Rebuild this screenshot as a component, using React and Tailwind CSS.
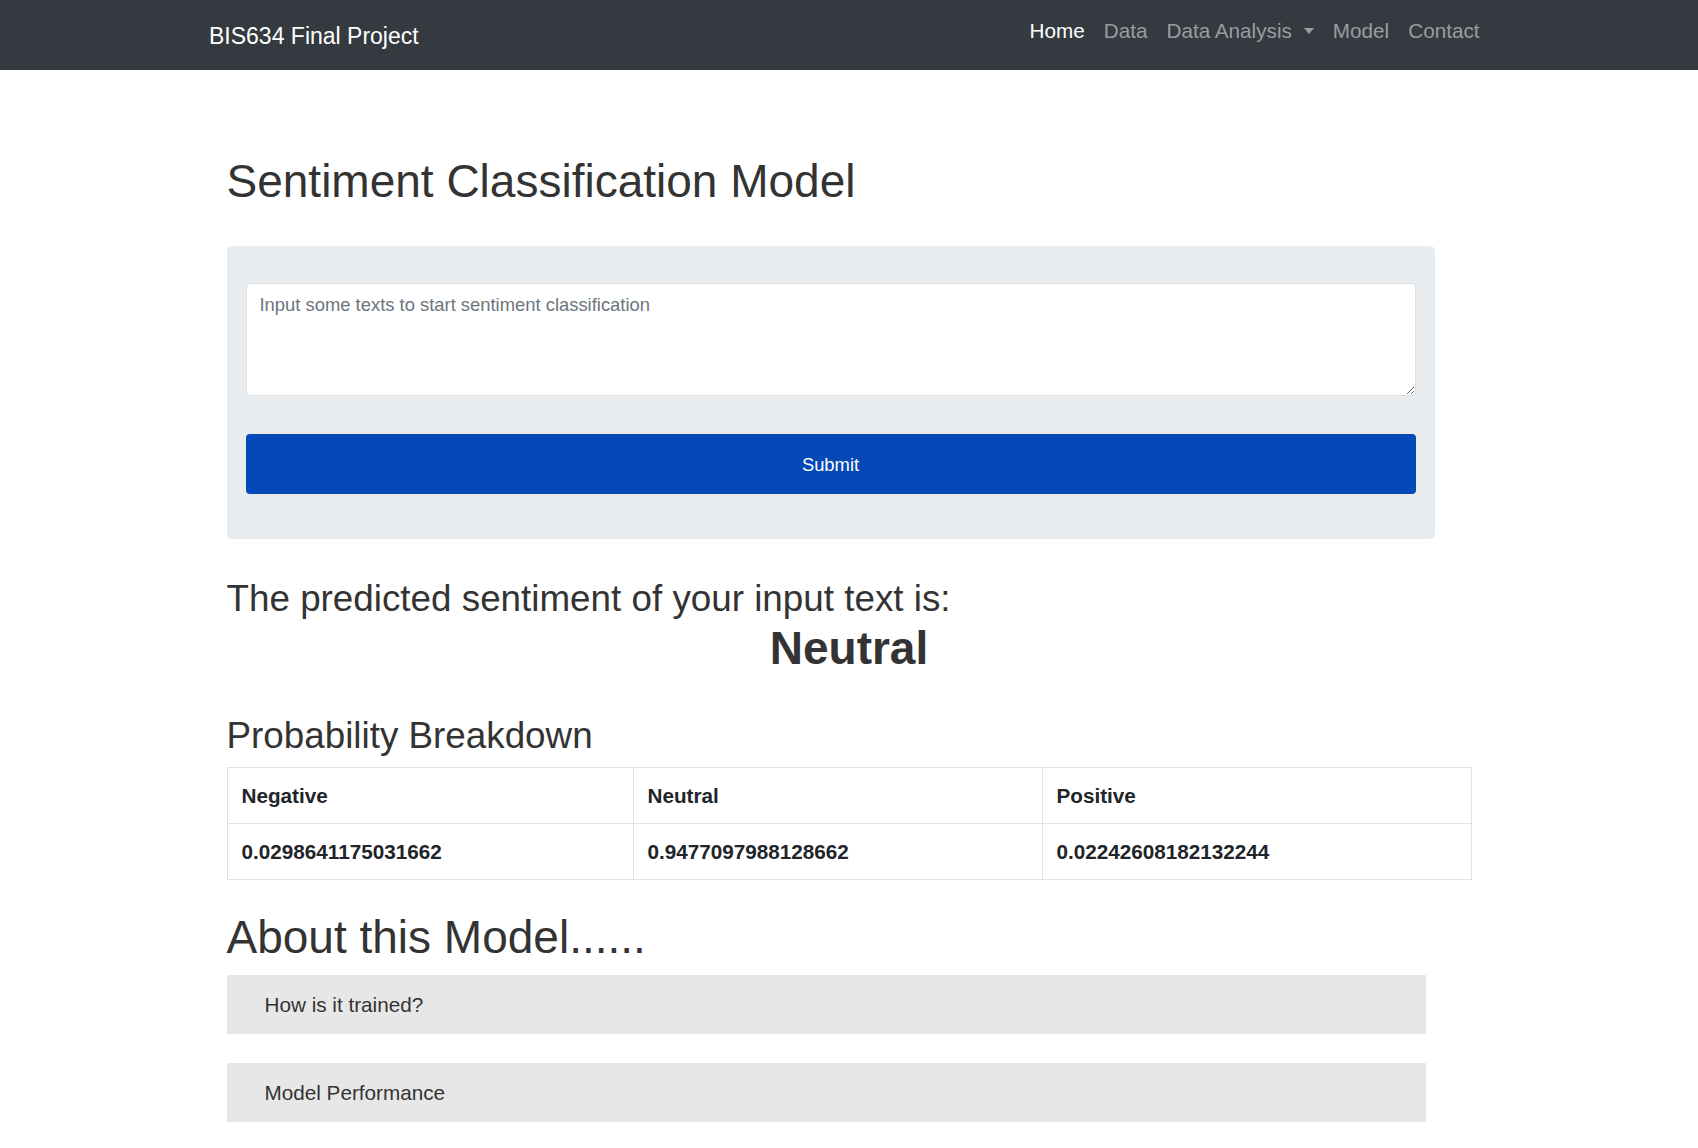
export default function App() {
    const probs = [
        { label: "Negative", value: "0.0298641175031662", w: "w-[406px]" },
        { label: "Neutral", value: "0.9477097988128662", w: "w-[409px]" },
        { label: "Positive", value: "0.02242608182132244", w: "" },
    ];

    return (
        <div className="min-h-screen bg-white text-[#333] font-['Liberation_Sans',Arial,sans-serif]">
            <nav className="bg-[#343a40] h-[70px]">
                <div className="w-[1280px] mx-auto h-full flex items-center justify-between">
                    <a className="text-white text-[23px] pt-[2px]">BIS634 Final Project</a>
                    <ul className="flex items-center text-[20.7px] -mt-[8px]">
                        <li className="px-[9.5px] text-white">Home</li>
                        <li className="px-[9.5px] text-[#9a9da0]">Data</li>
                        <li className="px-[9.5px] text-[#9a9da0] flex items-center">
                            Data Analysis
                            <span className="ml-[12px] inline-block w-0 h-0 border-l-[5.5px] border-r-[5.5px] border-t-[6px] border-l-transparent border-r-transparent border-t-[#9a9da0]"></span>
                        </li>
                        <li className="px-[9.5px] text-[#9a9da0]">Model</li>
                        <li className="px-[9.5px] text-[#9a9da0]">Contact</li>
                    </ul>
                </div>
            </nav>

            <main className="w-[1245px] mx-auto pt-[84px] pb-[40px]">
                <h1 className="text-[46px] leading-[55px]">Sentiment Classification Model</h1>

                <div className="mt-[37px] w-[1208px] bg-[#e9ecef] rounded-[5px] px-[19px] pt-[37px] pb-[45px]">
                    <textarea
                        className="block w-full h-[113px] bg-white border border-[#dde0e3] rounded-[4px] px-[13px] pt-[7px] text-[18.4px] placeholder:text-[#6c757d] resize-y outline-none"
                        placeholder="Input some texts to start sentiment classification"
                    />
                    <button className="mt-[38px] w-full h-[60px] bg-[#0449b7] text-white text-[18.4px] pt-[2px] rounded-[4px]">
                        Submit
                    </button>
                </div>

                <h3 className="mt-[38px] text-[36.8px] leading-[44px]">The predicted sentiment of your input text is:</h3>
                <h1 className="text-[46px] leading-[55px] font-bold text-center">Neutral</h1>

                <h2 className="mt-[38px] text-[36.8px] leading-[44px]">Probability Breakdown</h2>
                <table className="mt-[9px] w-full border border-[#dee2e6] border-collapse text-[20.7px] font-bold text-[#212529]">
                    <thead>
                        <tr className="h-[56px]">
                            {probs.map((p) => (
                                <th key={p.label} className={`${p.w} border border-[#dee2e6] text-left px-[14px]`}>
                                    {p.label}
                                </th>
                            ))}
                        </tr>
                    </thead>
                    <tbody>
                        <tr className="h-[56px]">
                            {probs.map((p) => (
                                <td key={p.label} className="border border-[#dee2e6] px-[14px]">
                                    {p.value}
                                </td>
                            ))}
                        </tr>
                    </tbody>
                </table>

                <h1 className="mt-[30px] text-[46px] leading-[55px]">About this Model......</h1>
                <div className="mt-[10px] w-[1199px] flex flex-col gap-[29px]">
                    <div className="h-[59px] bg-[#e7e7e7] flex items-center px-[38px] text-[20.7px]">How is it trained?</div>
                    <div className="h-[59px] bg-[#e7e7e7] flex items-center px-[38px] text-[20.7px]">Model Performance</div>
                </div>
            </main>
        </div>
    );
}
